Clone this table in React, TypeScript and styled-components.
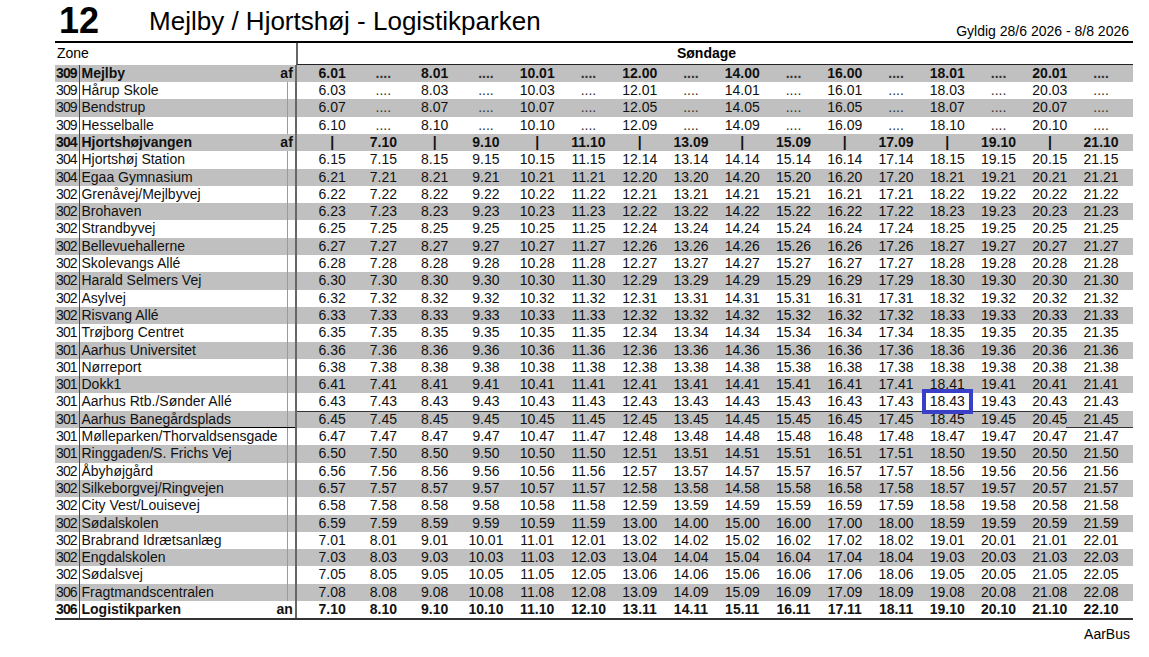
import styled, { createGlobalStyle, css } from "styled-components";

const GlobalStyle = createGlobalStyle`
    body {
        margin: 0;
        background: #fff;
        color: #000;
        font-family: "Liberation Sans", Arial, sans-serif;
    }
`;

type Kind = "start" | "branch" | "all";

type Stop = {
    zone: string;
    name: string;
    kind: Kind;
    a: number;
    b: number;
    mark?: "af" | "an";
    rule?: boolean;
};

const stops: Stop[] = [
    { zone: "309", name: "Mejlby", kind: "start", a: 1, b: 0, mark: "af" },
    { zone: "309", name: "Hårup Skole", kind: "start", a: 3, b: 1 },
    { zone: "309", name: "Bendstrup", kind: "start", a: 7, b: 5 },
    { zone: "309", name: "Hesselballe", kind: "start", a: 10, b: 9 },
    { zone: "304", name: "Hjortshøjvangen", kind: "branch", a: 10, b: 9, mark: "af" },
    { zone: "304", name: "Hjortshøj Station", kind: "all", a: 15, b: 14 },
    { zone: "304", name: "Egaa Gymnasium", kind: "all", a: 21, b: 20 },
    { zone: "302", name: "Grenåvej/Mejlbyvej", kind: "all", a: 22, b: 21 },
    { zone: "302", name: "Brohaven", kind: "all", a: 23, b: 22 },
    { zone: "302", name: "Strandbyvej", kind: "all", a: 25, b: 24 },
    { zone: "302", name: "Bellevuehallerne", kind: "all", a: 27, b: 26 },
    { zone: "302", name: "Skolevangs Allé", kind: "all", a: 28, b: 27 },
    { zone: "302", name: "Harald Selmers Vej", kind: "all", a: 30, b: 29 },
    { zone: "302", name: "Asylvej", kind: "all", a: 32, b: 31 },
    { zone: "302", name: "Risvang Allé", kind: "all", a: 33, b: 32 },
    { zone: "301", name: "Trøjborg Centret", kind: "all", a: 35, b: 34 },
    { zone: "301", name: "Aarhus Universitet", kind: "all", a: 36, b: 36 },
    { zone: "301", name: "Nørreport", kind: "all", a: 38, b: 38 },
    { zone: "301", name: "Dokk1", kind: "all", a: 41, b: 41 },
    { zone: "301", name: "Aarhus Rtb./Sønder Allé", kind: "all", a: 43, b: 43 },
    { zone: "301", name: "Aarhus Banegårdsplads", kind: "all", a: 45, b: 45, rule: true },
    { zone: "301", name: "Mølleparken/Thorvaldsensgade", kind: "all", a: 47, b: 48 },
    { zone: "301", name: "Ringgaden/S. Frichs Vej", kind: "all", a: 50, b: 51 },
    { zone: "302", name: "Åbyhøjgård", kind: "all", a: 56, b: 57 },
    { zone: "302", name: "Silkeborgvej/Ringvejen", kind: "all", a: 57, b: 58 },
    { zone: "302", name: "City Vest/Louisevej", kind: "all", a: 58, b: 59 },
    { zone: "302", name: "Sødalskolen", kind: "all", a: 59, b: 60 },
    { zone: "302", name: "Brabrand Idrætsanlæg", kind: "all", a: 61, b: 62 },
    { zone: "302", name: "Engdalskolen", kind: "all", a: 63, b: 64 },
    { zone: "302", name: "Sødalsvej", kind: "all", a: 65, b: 66 },
    { zone: "306", name: "Fragtmandscentralen", kind: "all", a: 68, b: 69 },
    { zone: "306", name: "Logistikparken", kind: "all", a: 70, b: 71, mark: "an" },
];

// the marked departure in the scan
const HIGHLIGHT = { row: 19, col: 12 };

const fmt = (mins: number) => `${Math.floor(mins / 60)}.${String(mins % 60).padStart(2, "0")}`;

const cellsFor = (s: Stop) =>
    Array.from({ length: 16 }, (_, i) => {
        if (s.kind === "start" && i % 2 === 1) return "....";
        if (s.kind === "branch" && i % 2 === 0) return "|";
        const off = i >= 6 && i <= 11 ? s.b : s.a;
        return fmt((6 + i) * 60 + off);
    });

export default function App() {
    return (
        <Page>
            <GlobalStyle />
            <TopBar>
                <RouteNo>12</RouteNo>
                <RouteName>Mejlby / Hjortshøj - Logistikparken</RouteName>
                <Validity>Gyldig 28/6 2026 - 8/8 2026</Validity>
            </TopBar>
            <Table>
                <HeadRow>
                    <ZoneHead>Zone</ZoneHead>
                    <DayHead>Søndage</DayHead>
                </HeadRow>
                {stops.map((s, r) => {
                    const bold = !!s.mark;
                    return (
                        <Row key={s.name} $shade={r % 2 === 0} $bold={bold}>
                            <ZoneCell>{s.zone}</ZoneCell>
                            <NameCell $rule={s.rule}>{s.name}</NameCell>
                            <MarkCell $rule={s.rule} $empty={!bold}>
                                {s.mark}
                            </MarkCell>
                            <Divider />
                            <Times $rule={s.rule}>
                                {cellsFor(s).map((t, c) => (
                                    <Time
                                        key={c}
                                        $dots={t === "...."}
                                        $marked={r === HIGHLIGHT.row && c === HIGHLIGHT.col}
                                    >
                                        {t}
                                    </Time>
                                ))}
                            </Times>
                        </Row>
                    );
                })}
            </Table>
            <Footer>AarBus</Footer>
        </Page>
    );
}

const Page = styled.div`
    width: 1078px;
    padding-left: 55px;
`;

const TopBar = styled.div`
    display: flex;
    align-items: flex-start;
    height: 41px;
`;

const RouteNo = styled.div`
    margin-top: 2.5px;
    margin-left: 4px;
    font-size: 36px;
    line-height: 36px;
    font-weight: bold;
`;

const RouteName = styled.div`
    margin-top: 7.5px;
    margin-left: 50px;
    font-size: 26px;
    line-height: 26px;
`;

const Validity = styled.div`
    margin-top: 24px;
    margin-left: auto;
    padding-right: 4px;
    font-size: 14px;
    line-height: 14px;
`;

const Table = styled.div`
    border-top: 2.5px solid #000;
    border-bottom: 2px solid #333;
`;

const HeadRow = styled.div`
    display: flex;
    height: 21.8px;
    font-size: 14px;
`;

const ZoneHead = styled.div`
    width: 239px;
    padding-left: 2px;
    line-height: 21px;
`;

const DayHead = styled.div`
    flex: 1;
    box-sizing: border-box;
    border-left: 2px solid #666;
    border-bottom: 1.4px solid #222;
    padding-right: 18px;
    text-align: center;
    font-weight: bold;
    line-height: 20px;
`;

const Row = styled.div<{ $shade: boolean; $bold: boolean }>`
    display: flex;
    height: 17.3px;
    line-height: 17.3px;
    font-size: 14px;
    white-space: nowrap;
    background: ${(p) => (p.$shade ? "#c0c0c0" : "#fff")};
    font-weight: ${(p) => (p.$bold ? "bold" : "normal")};
    color: #111;
`;

const ZoneCell = styled.div`
    width: 23px;
    padding-left: 1px;
    border-right: 1px solid #444;
    letter-spacing: -0.9px;
`;

const NameCell = styled.div<{ $rule?: boolean }>`
    width: 189.5px;
    padding-left: 1.5px;
    ${(p) =>
        p.$rule &&
        css`
            box-shadow: inset 0 -1px 0 #000;
        `}
`;

const MarkCell = styled.div<{ $rule?: boolean; $empty: boolean }>`
    width: 22px;
    padding-right: 2px;
    text-align: right;
    ${(p) =>
        p.$empty &&
        css`
            background: linear-gradient(#9a9a9a, #9a9a9a) 16px 0 / 1px 100% no-repeat;
        `}
    ${(p) =>
        p.$rule &&
        css`
            box-shadow: inset 0 -1px 0 #000;
        `}
`;

const Divider = styled.div`
    width: 2px;
    background: #666;
`;

const Times = styled.div<{ $rule?: boolean }>`
    display: grid;
    grid-template-columns: repeat(16, 51.27px);
    width: 837px;
    box-sizing: border-box;
    padding-left: 9.7px;
    ${(p) =>
        p.$rule &&
        css`
            background: linear-gradient(#333, #333) left top / calc(100% - 67px) 1px no-repeat,
                linear-gradient(#333, #333) right bottom / 67px 1px no-repeat;
        `}
`;

const Time = styled.div<{ $dots: boolean; $marked: boolean }>`
    position: relative;
    text-align: center;
    color: ${(p) => (p.$dots ? "#333" : "inherit")};
    ${(p) =>
        p.$marked &&
        css`
            &::after {
                content: "";
                position: absolute;
                top: -4px;
                bottom: -3px;
                left: 0;
                right: 0;
                border: 4px solid #3a3fc8;
            }
        `}
`;

const Footer = styled.div`
    margin-top: 6px;
    padding-right: 3px;
    text-align: right;
    font-size: 14px;
    line-height: 16px;
`;
